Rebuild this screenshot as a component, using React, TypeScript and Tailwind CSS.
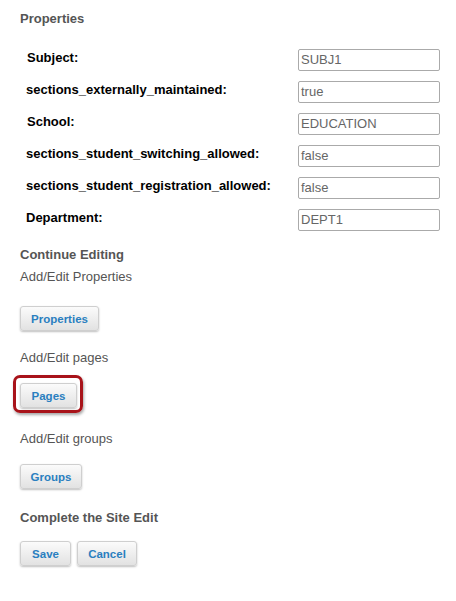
import React from "react";

const rows: [string, string, string][] = [
  ["Subject:", "SUBJ1", "pl-[7px]"],
  ["sections_externally_maintained:", "true", "pl-[6px]"],
  ["School:", "EDUCATION", "pl-[7px]"],
  ["sections_student_switching_allowed:", "false", "pl-[6px]"],
  ["sections_student_registration_allowed:", "false", "pl-[6px]"],
  ["Department:", "DEPT1", "pl-[6px]"],
];

function Btn({ children, className = "" }: { children: React.ReactNode; className?: string }) {
  return (
    <button
      className={
        "h-[25px] rounded-[3px] border border-[#cfcfcf] bg-gradient-to-b from-[#fbfbfb] to-[#e2e2e2] px-[8px] text-[11.5px] font-bold text-[#2a7fc0] shadow-[0_1px_2px_rgba(0,0,0,0.25)] " +
        className
      }
    >
      {children}
    </button>
  );
}

export default function App() {
  return (
    <div
      className="w-[456px] h-[601px] bg-white pl-[20px] pt-[11px] text-[13px] leading-[16px] text-[#555]"
      style={{ fontFamily: '"Liberation Sans", Arial, sans-serif' }}
    >
      <div className="font-bold">Properties</div>
      <div className="mt-[22px] flex flex-col">
        {rows.map(([label, value, pl]) => (
          <div key={label} className="flex h-[32px] items-start">
            <div className={"w-[278px] pt-[1px] font-bold text-black " + pl}>{label}</div>
            <div className="h-[22px] w-[142px] rounded-[2px] border border-[#aaa] pl-[2px] leading-[20px] text-[#666]">
              {value}
            </div>
          </div>
        ))}
      </div>
      <div className="mt-[6px] font-bold">Continue Editing</div>
      <div className="mt-[6px]">Add/Edit Properties</div>
      <Btn className="mt-[21px] w-[79px]">Properties</Btn>
      <div className="mt-[19px]">Add/Edit pages</div>
      <div className="relative mt-[17px] h-[25px]">
        <Btn className="w-[57px]">Pages</Btn>
        <div className="pointer-events-none absolute left-[-7px] top-[-8px] h-[38px] w-[70px] rounded-[7px] border-[3px] border-[#a8131a] shadow-[1px_2px_3px_rgba(0,0,0,0.35)]" />
      </div>
      <div className="mt-[23px]">Add/Edit groups</div>
      <Btn className="mt-[17px] w-[62px]">Groups</Btn>
      <div className="mt-[21px] font-bold">Complete the Site Edit</div>
      <div className="mt-[15px] flex gap-[6px]">
        <Btn className="w-[51px]">Save</Btn>
        <Btn className="w-[60px]">Cancel</Btn>
      </div>
    </div>
  );
}
